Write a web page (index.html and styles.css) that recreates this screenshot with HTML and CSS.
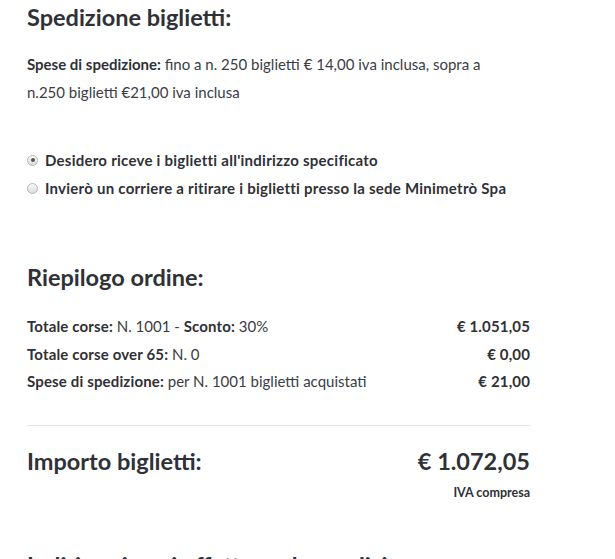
FILE: index.html
```html
<!DOCTYPE html>
<html lang="it">
<head>
<meta charset="utf-8">
<link rel="stylesheet" href="styles.css">
</head>
<body>
<main class="page">
  <section class="block">
    <h2 class="title">Spedizione biglietti:</h2>
    <p class="text"><strong>Spese di spedizione:</strong> fino a n. 250 biglietti € 14,00 iva inclusa, sopra a n.250 biglietti €21,00 iva inclusa</p>
    <div class="options">
      <label class="option"><span class="radio checked"></span>Desidero riceve i biglietti all'indirizzo specificato</label>
      <label class="option"><span class="radio"></span>Invierò un corriere a ritirare i biglietti presso la sede Minimetrò Spa</label>
    </div>
  </section>
  <section class="block summary">
    <h2 class="title">Riepilogo ordine:</h2>
    <div class="rows">
      <div class="row"><span><strong>Totale corse:</strong> N. 1001 - <strong>Sconto:</strong> 30%</span><strong>€ 1.051,05</strong></div>
      <div class="row"><span><strong>Totale corse over 65:</strong> N. 0</span><strong>€ 0,00</strong></div>
      <div class="row"><span><strong>Spese di spedizione:</strong> per N. 1001 biglietti acquistati</span><strong>€ 21,00</strong></div>
    </div>
    <div class="total">
      <div class="total-row"><h2 class="title">Importo biglietti:</h2><span class="amount">€ 1.072,05</span></div>
      <div class="vat">IVA compresa</div>
    </div>
  </section>
  <section class="block next">
    <h2 class="title">Indirizzo in cui effettuare la spedizione</h2>
  </section>
</main>
</body>
</html>
```
FILE: styles.css
```css
html, body { margin: 0; padding: 0; background: #fff; }
body {
  font-family: "Lato", "Open Sans", sans-serif;
  color: #2f3137;
  overflow: hidden;
}
.page {
  width: 503px;
  padding: 1px 0 0 27px;
}
.title {
  margin: 0;
  font-size: 23.5px;
  font-weight: 700;
  line-height: 32px;
  color: #2f3137;
}
.text {
  margin: 17px 0 0;
  max-width: 475px;
  font-size: 15px;
  line-height: 28px;
  color: #3a3d44;
}
strong { color: #2f3137; }
.options {
  margin-top: 40px;
  display: flex;
  flex-direction: column;
}
.option {
  display: flex;
  align-items: center;
  gap: 7px;
  font-size: 15px;
  font-weight: 700;
  letter-spacing: 0.25px;
  line-height: 28px;
  color: #2f3137;
}
.radio {
  width: 11px;
  height: 11px;
  border-radius: 50%;
  border: 1px solid #b5b5b5;
  background: linear-gradient(#fafafa, #dcdcdc);
  box-sizing: border-box;
  position: relative;
  flex: none;
}
.radio.checked::after {
  content: "";
  position: absolute;
  left: 2.5px; top: 2.5px;
  width: 4px; height: 4px;
  border-radius: 50%;
  background: #555;
}
.summary { margin-top: 59px; }
.rows {
  margin-top: 20px;
  display: flex;
  flex-direction: column;
}
.row {
  display: flex;
  justify-content: space-between;
  font-size: 15px;
  line-height: 27.5px;
  color: #3a3d44;
}
.row strong { letter-spacing: 0.15px; }
.total {
  margin-top: 29px;
  border-top: 1px solid #e6e6e6;
  padding-top: 19px;
}
.total-row {
  display: flex;
  justify-content: space-between;
  align-items: center;
}
.amount {
  font-size: 23.5px;
  font-weight: 700;
  line-height: 32px;
}
.vat {
  text-align: right;
  font-size: 12.5px;
  font-weight: 700;
  line-height: 20px;
  margin-top: 6px;
}
.next { margin-top: 46px; }
```
